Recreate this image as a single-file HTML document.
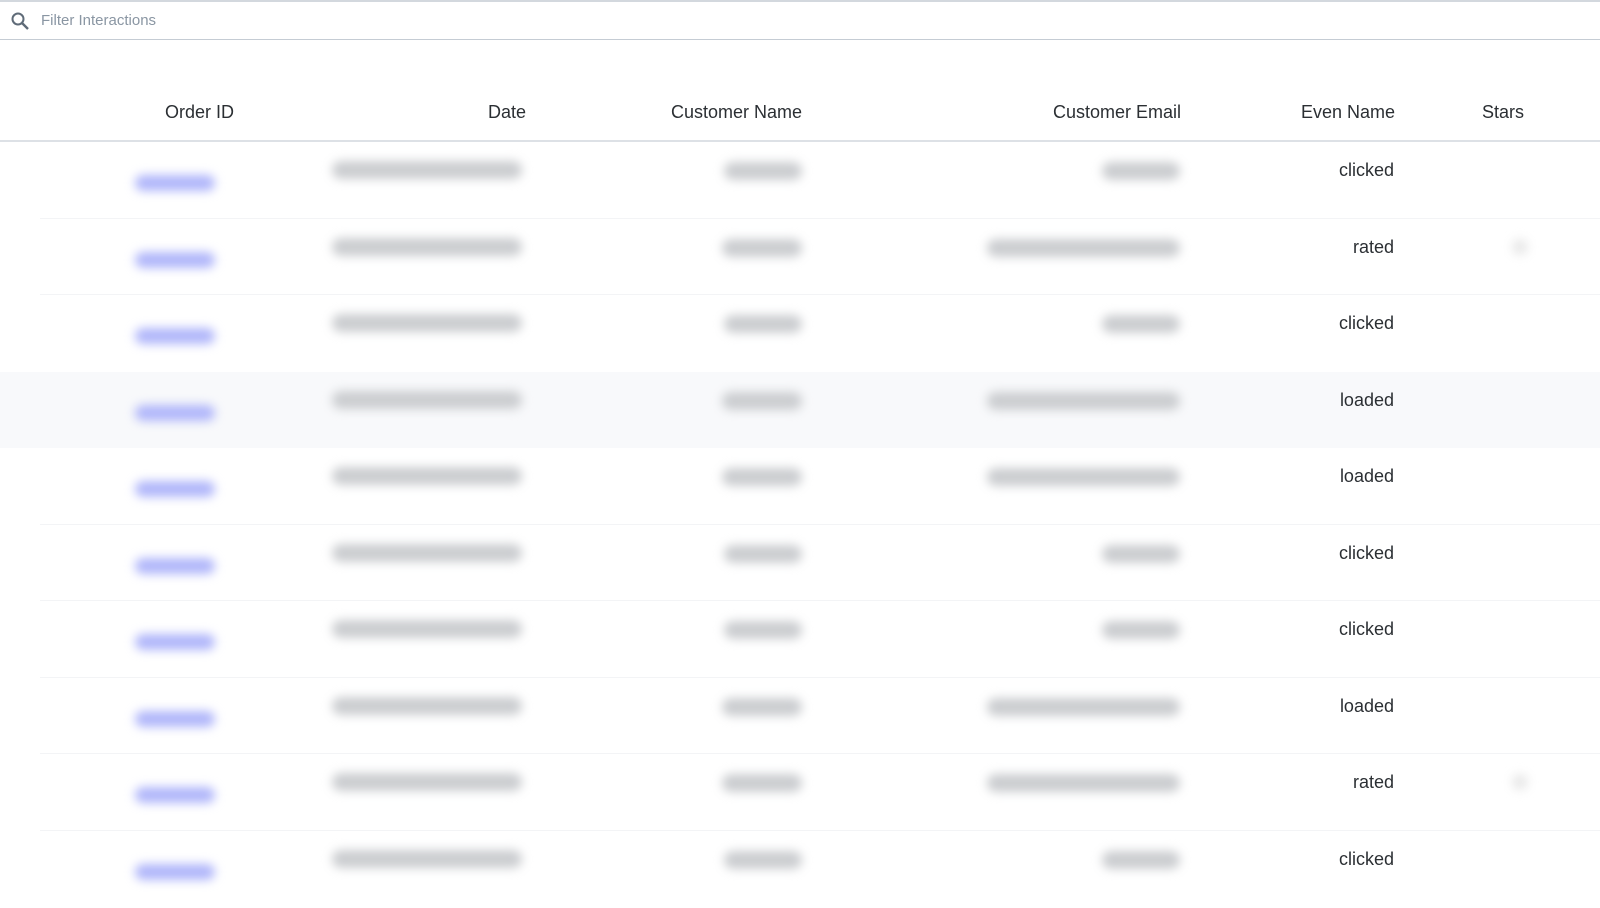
<!DOCTYPE html>
<html><head><style>
body{margin:0;width:1600px;height:900px;overflow:hidden;background:#fff;font-family:"Liberation Sans",sans-serif;position:relative}
.top{position:absolute;left:0;top:0;width:1600px;height:37px;border-top:2px solid #d3d8de;border-bottom:1px solid #c5ccd4}
.ph{position:absolute;left:41px;top:10px;font-size:15px;color:#8a96a3}
.h{position:absolute;top:102px;font-size:18px;color:#2b2f33}
.hl{position:absolute;left:0;top:140px;width:1600px;height:2px;background:#dde1e6}
.row{position:absolute;left:0;width:1600px;height:77px}
.b{position:absolute;height:18px;border-radius:9px;filter:blur(5px);background:#cbcdd0}
.o{background:#b0b6fa;height:16px}
.ev{position:absolute;right:206px;top:18px;font-size:18px;color:#2b2f33}
.sep{position:absolute;left:40px;width:1560px;height:1px;background:#f3f4f6}
.d{left:332px;top:19px;width:190px}
.oi{left:135px;top:33px;width:80px}
.nu{left:724px;top:20px;width:78px}
.nt{left:722px;top:20px;width:80px}
.eu{left:1102px;top:20px;width:78px}
.el{left:987px;top:20px;width:193px}
.st{left:1512px;top:20px;width:16px;height:16px;background:#e8e8e8}
</style></head><body>
<div class="top">
<svg style="position:absolute;left:10px;top:9px" width="20" height="20" viewBox="0 0 20 20"><circle cx="8" cy="8" r="5.5" fill="none" stroke="#5f6b78" stroke-width="2"/><line x1="12" y1="12" x2="18" y2="18" stroke="#5f6b78" stroke-width="2.4"/></svg>
<div class="ph">Filter Interactions</div></div>
<div class="h" style="left:165px">Order ID</div>
<div class="h" style="left:488px">Date</div>
<div class="h" style="left:671px">Customer Name</div>
<div class="h" style="left:1053px">Customer Email</div>
<div class="h" style="left:1301px">Even Name</div>
<div class="h" style="left:1482px">Stars</div>
<div class="hl"></div>

<div class="row" style="top:142px"><div class="b o oi"></div><div class="b d"></div><div class="b nu"></div><div class="b eu"></div><div class="ev">clicked</div></div>
<div class="sep" style="top:217.5px"></div>
<div class="row" style="top:218.5px"><div class="b o oi"></div><div class="b d"></div><div class="b nt"></div><div class="b el"></div><div class="ev">rated</div><div class="b st"></div></div>
<div class="sep" style="top:294px"></div>
<div class="row" style="top:295px"><div class="b o oi"></div><div class="b d"></div><div class="b nu"></div><div class="b eu"></div><div class="ev">clicked</div></div>
<div class="row" style="top:371.5px;background:#f8f9fb;height:76px"><div class="b o oi"></div><div class="b d"></div><div class="b nt"></div><div class="b el"></div><div class="ev">loaded</div></div>
<div class="row" style="top:448px"><div class="b o oi"></div><div class="b d"></div><div class="b nt"></div><div class="b el"></div><div class="ev">loaded</div></div>
<div class="sep" style="top:523.5px"></div>
<div class="row" style="top:524.5px"><div class="b o oi"></div><div class="b d"></div><div class="b nu"></div><div class="b eu"></div><div class="ev">clicked</div></div>
<div class="sep" style="top:600px"></div>
<div class="row" style="top:601px"><div class="b o oi"></div><div class="b d"></div><div class="b nu"></div><div class="b eu"></div><div class="ev">clicked</div></div>
<div class="sep" style="top:676.5px"></div>
<div class="row" style="top:677.5px"><div class="b o oi"></div><div class="b d"></div><div class="b nt"></div><div class="b el"></div><div class="ev">loaded</div></div>
<div class="sep" style="top:753px"></div>
<div class="row" style="top:754px"><div class="b o oi"></div><div class="b d"></div><div class="b nt"></div><div class="b el"></div><div class="ev">rated</div><div class="b st"></div></div>
<div class="sep" style="top:829.5px"></div>
<div class="row" style="top:830.5px"><div class="b o oi"></div><div class="b d"></div><div class="b nu"></div><div class="b eu"></div><div class="ev">clicked</div></div>
</body></html>
